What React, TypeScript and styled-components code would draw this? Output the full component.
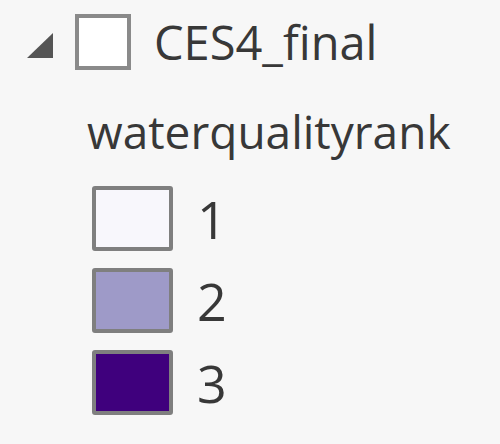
import React from "react";
import styled, { createGlobalStyle } from "styled-components";

const Global = createGlobalStyle`
  html, body { margin: 0; padding: 0; background: #f7f7f7; }
  body { font-family: "Open Sans", "Noto Sans", sans-serif; color: #383838; }
`;

const Pane = styled.div`
  width: 500px;
  height: 444px;
  box-sizing: border-box;
  padding: 14px 0 0 27px;
  display: flex;
  flex-direction: column;
`;

const LayerRow = styled.div`
  display: flex;
  align-items: center;
  height: 56px;
`;

const Expander = styled.svg`
  width: 26px;
  height: 26px;
  margin-top: 8px;
  flex: none;
`;

const CheckBox = styled.div`
  width: 56px;
  height: 56px;
  box-sizing: border-box;
  border: 4px solid #8a8a8a;
  background: #ffffff;
  margin-left: 22px;
  flex: none;
`;

const LayerName = styled.span`
  margin-left: 23px;
  font-size: 47px;
  line-height: 56px;
  white-space: nowrap;
`;

const FieldName = styled.div`
  margin: 36px 0 0 60px;
  font-size: 46px;
  line-height: 50px;
  white-space: nowrap;
`;

const Legend = styled.div`
  display: flex;
  flex-direction: column;
  gap: 17px;
  margin: 30px 0 0 65px;
`;

const LegendItem = styled.div`
  display: flex;
  align-items: center;
`;

const Swatch = styled.div<{ $fill: string }>`
  width: 81px;
  height: 65px;
  box-sizing: border-box;
  border: 4px solid #7f7f7f;
  border-radius: 3px;
  background: ${(p) => p.$fill};
  flex: none;
`;

const ItemLabel = styled.span`
  margin-left: 24px;
  font-size: 52px;
  line-height: 65px;
`;

const items = [
  { label: "1", fill: "#f8f7fc" },
  { label: "2", fill: "#9e9ac8" },
  { label: "3", fill: "#3f007d" },
];

export default function App() {
  return (
    <>
      <Global />
      <Pane>
        <LayerRow>
          <Expander viewBox="0 0 26 26">
            <polygon points="26,0 26,25 0,25" fill="#555555" />
          </Expander>
          <CheckBox />
          <LayerName>CES4_final</LayerName>
        </LayerRow>
        <FieldName>waterqualityrank</FieldName>
        <Legend>
          {items.map((it) => (
            <LegendItem key={it.label}>
              <Swatch $fill={it.fill} />
              <ItemLabel>{it.label}</ItemLabel>
            </LegendItem>
          ))}
        </Legend>
      </Pane>
    </>
  );
}
